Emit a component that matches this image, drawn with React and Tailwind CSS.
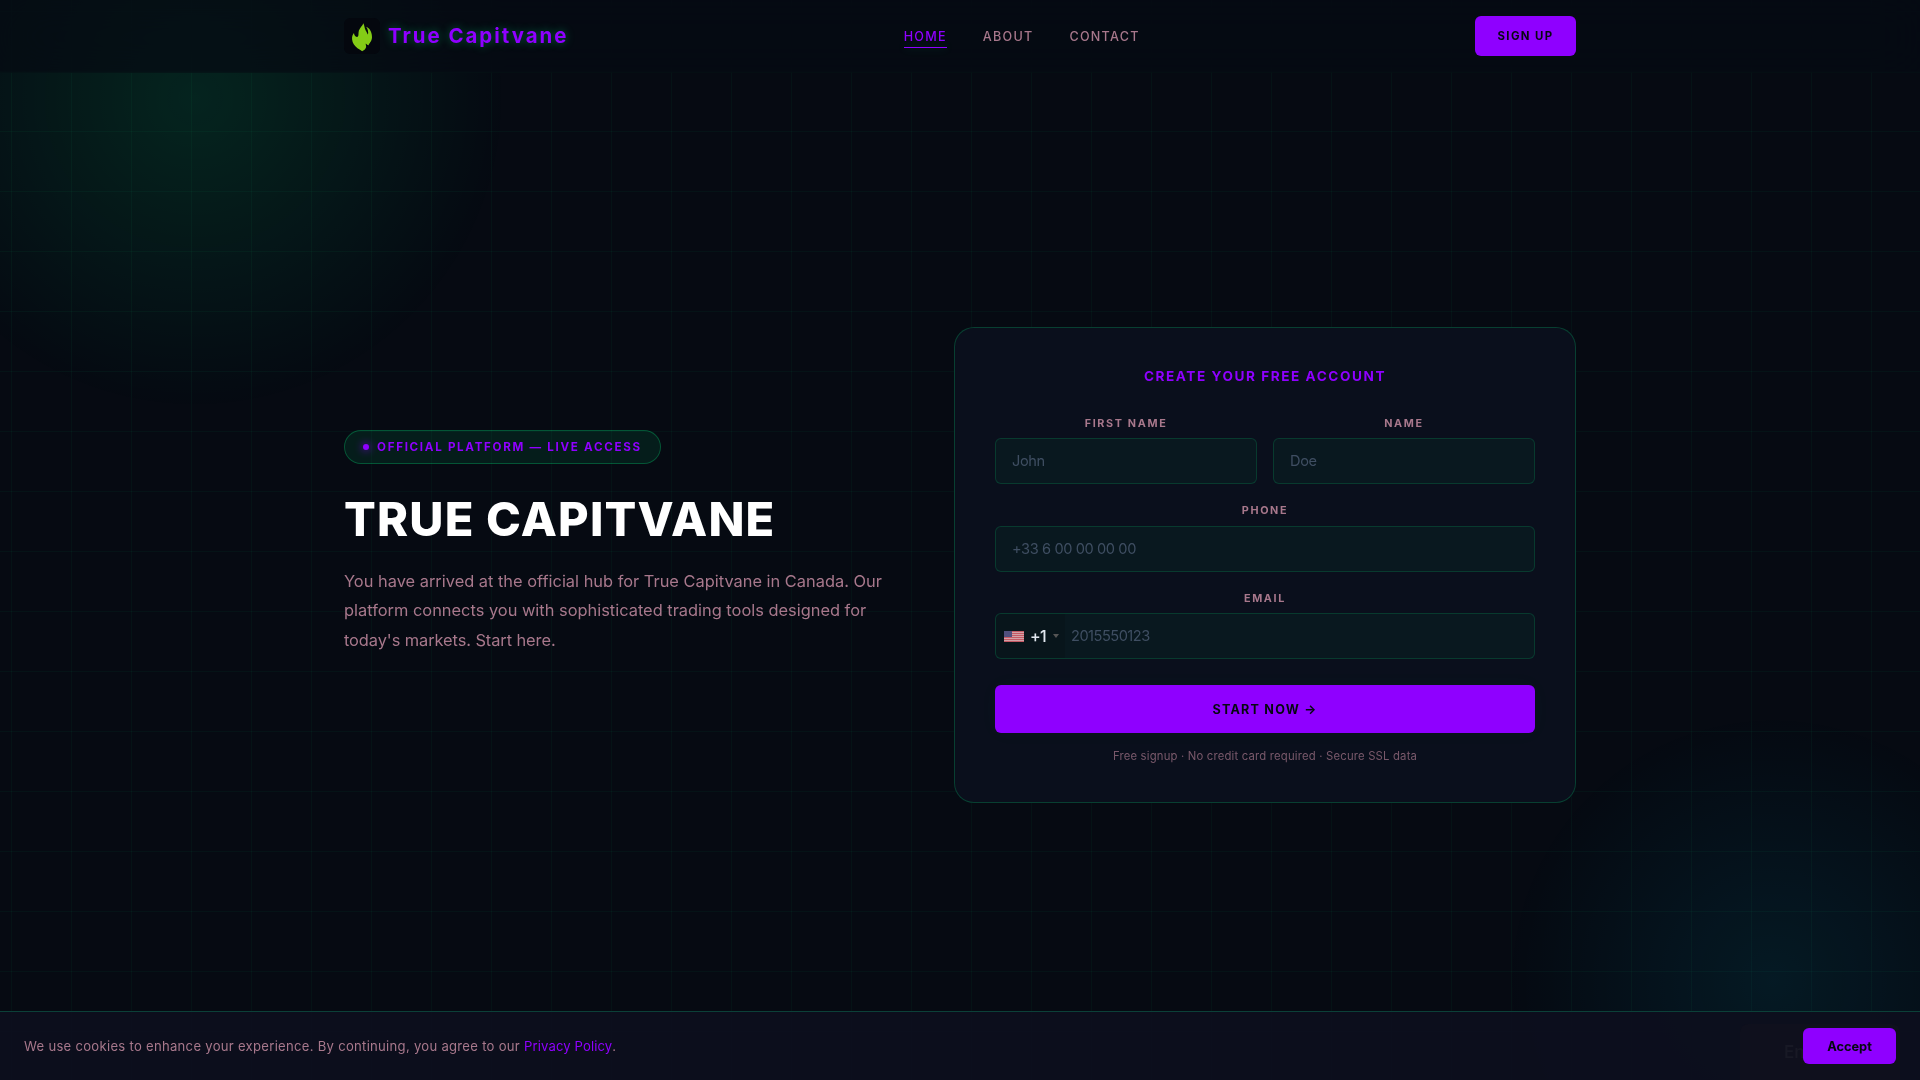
const navLinks = [
  { label: "HOME", active: true },
  { label: "ABOUT" },
  { label: "CONTACT" },
];

const inputClass =
  "h-[46px] w-full rounded-md border border-[#00ff88]/15 bg-[#00ff88]/[0.04] px-4 text-[14.6px] tracking-[-0.4px] text-white outline-none placeholder:text-[#3f4e62]";

function FlameLogo() {
  return (
    <svg viewBox="0 0 36 36" className="h-9 w-9 rounded-md bg-[#04070e]">
      <path
        fill="#84cc16"
        d="M19.3 5.2C18.8 7.6 16 9.2 14.9 12.6C14.2 14.9 14.8 17 14 18.5C13 19.6 11.4 18.6 10.8 17.6C10.2 16.8 10 16 10 15C8.6 16.6 7.8 18.6 8.1 21.5C8.4 25 10.4 27.8 13.5 30.2C15.2 31.5 16.9 32 18.1 33.2C19.8 32.4 21.6 31 22.1 29.2C22.4 27.8 21.5 27 21.8 25.6C22.6 26 23 27.2 24.6 27.3C25 25.4 27.9 23.5 28 19.3C28.1 15.5 26.5 10.4 22.1 8.8C23.6 10.7 24.6 13.6 24 16.6C23.4 16.2 22.8 14 21.7 12.4C20.5 10.4 20.6 7.5 19.3 5.2Z"
      />
    </svg>
  );
}

function UsFlag() {
  return (
    <svg viewBox="0 0 20 11" className="h-[11px] w-5 opacity-90" shapeRendering="crispEdges">
      <rect width="20" height="11" fill="#e8b0b6" />
      {[0, 2, 4, 6, 8, 10].map((y) => (
        <rect key={y} y={y} width="20" height="1" fill="#d9616c" />
      ))}
      <rect width="8" height="6" fill="#5a5688" />
    </svg>
  );
}

function Field({ label, children }) {
  return (
    <div className="w-full">
      <label className="mb-[6.5px] block text-center text-[10.8px] leading-4 font-bold tracking-[1.65px] text-[#a8788c]">
        {label}
      </label>
      {children}
    </div>
  );
}

function Background() {
  return (
    <div className="fixed inset-0 overflow-hidden">
      <div className="absolute inset-0 bg-[linear-gradient(rgba(0,255,136,0.04)_1px,transparent_1px),linear-gradient(90deg,rgba(0,255,136,0.04)_1px,transparent_1px)] bg-[size:60px_60px] bg-[position:11px_11px]" />
      <div className="absolute -top-[217px] -left-[120px] h-[630px] w-[630px] rounded-full bg-[radial-gradient(circle,rgba(0,255,136,0.11)_0%,transparent_70%)]" />
      <div className="absolute -right-[123px] -bottom-[171px] h-[540px] w-[540px] rounded-full bg-[radial-gradient(circle,rgba(0,212,255,0.08)_0%,transparent_70%)]" />
    </div>
  );
}

function Header() {
  return (
    <header className="fixed inset-x-0 top-0 z-20 h-[73px] border-b border-[#00ff88]/[0.02] bg-[#060a12]/70 backdrop-blur-xl">
      <div className="mx-auto flex h-full w-[1232px] items-center justify-between">
        <a href="#" className="flex items-center gap-2">
          <FlameLogo />
          <span className="text-[20.4px] font-bold tracking-[2px] text-[#8f00ff] [text-shadow:0_0_10px_rgba(0,255,136,0.4)]">
            True Capitvane
          </span>
        </a>
        <nav className="flex gap-9 pt-0.5">
          {navLinks.map((link) => (
            <a
              key={link.label}
              href="#"
              className={
                link.active
                  ? "relative text-[12.6px] leading-5 font-medium tracking-[1.25px] text-[#8f00ff]"
                  : "text-[12.6px] leading-5 font-medium tracking-[1.25px] text-[#a8788c]"
              }
            >
              {link.label}
              {link.active && (
                <span className="absolute inset-x-0 -bottom-[1px] h-px bg-[#8f00ff] shadow-[0_0_8px_rgba(0,255,136,0.3)]" />
              )}
            </a>
          ))}
        </nav>
        <button className="h-10 w-[101px] rounded-md bg-[#8f00ff] pt-px text-[11.4px] font-bold tracking-[1.4px] text-[#050810]">
          SIGN UP
        </button>
      </div>
    </header>
  );
}

function Intro() {
  return (
    <div className="w-[546px] pb-[45px]">
      <div className="mb-7 flex h-[34px] w-[317px] items-center gap-2 rounded-full border border-[#00ff88]/25 bg-[#00ff88]/[0.08] pl-[18px]">
        <span className="h-1.5 w-1.5 rounded-full bg-[#8f00ff] shadow-[0_0_8px_#8f00ff]" />
        <span className="pt-px text-[11.6px] font-bold tracking-[1.7px] whitespace-nowrap text-[#8f00ff]">
          OFFICIAL PLATFORM — LIVE ACCESS
        </span>
      </div>
      <h1 className="mb-[21px] text-[47px] leading-[54px] font-extrabold tracking-[1.2px] text-white">
        TRUE CAPITVANE
      </h1>
      <p className="text-[16.4px] leading-[29.5px] text-[#a8788c]">
        You have arrived at the official hub for True Capitvane in Canada. Our
        <br />
        platform connects you with sophisticated trading tools designed for
        <br />
        <span className="tracking-[-0.08px]">today's markets. Start here.</span>
      </p>
    </div>
  );
}

function SignupForm() {
  return (
    <form className="w-[622px] rounded-[20px] border border-[#00ff88]/20 bg-[#0a0f1c] px-10 pt-10 pb-[38px]">
      <h2 className="mb-[31.5px] text-center text-[13.6px] leading-4 font-bold tracking-[1.55px] text-[#8f00ff]">
        CREATE YOUR FREE ACCOUNT
      </h2>
      <div className="flex flex-col gap-[19px]">
        <div className="flex gap-4">
          <Field label="FIRST NAME">
            <input className={inputClass} placeholder="John" />
          </Field>
          <Field label="NAME">
            <input className={inputClass} placeholder="Doe" />
          </Field>
        </div>
        <Field label="PHONE">
          <input className={inputClass} placeholder="+33 6 00 00 00 00" />
        </Field>
        <Field label="EMAIL">
          <div className="flex h-[46px] overflow-hidden rounded-md border border-[#00ff88]/15 bg-[#00ff88]/[0.04]">
            <div className="flex w-[69px] items-center bg-black/10 pl-2">
              <UsFlag />
              <span className="ml-[6px] text-base font-medium tracking-[-0.6px] text-[#e2e8f0]">+1</span>
              <span className="ml-[7px] h-0 w-0 border-x-[3px] border-t-4 border-x-transparent border-t-[#555]" />
            </div>
            <input
              className="flex-1 bg-transparent pt-px pl-[6px] text-[14.6px] tracking-[-0.5px] text-white outline-none placeholder:text-[#3f4e62]"
              placeholder="2015550123"
            />
          </div>
        </Field>
      </div>
      <button
        type="button"
        className="mt-[26px] h-12 w-full rounded-md bg-[#8f00ff] pt-0.5 text-[12.6px] font-bold tracking-[1.2px] text-[#050810] shadow-[0_0_20px_rgba(0,255,136,0.03)]"
      >
        START NOW →
      </button>
      <p className="mt-[15px] text-center text-[11.3px] leading-4 tracking-[0.19px] text-[#a8788c]/70">
        Free signup · No credit card required · Secure SSL data
      </p>
    </form>
  );
}

function CookieBar() {
  return (
    <div className="fixed inset-x-0 bottom-0 z-30 flex h-[69px] items-center justify-between border-t border-[#0b4038] bg-[#0d0f1e]/95 px-6">
      <p className="pt-0.5 text-[13.1px] tracking-[0.28px] text-[#a8788c]">
        We use cookies to enhance your experience. By continuing, you agree to our{" "}
        <a href="#" className="tracking-[0.12px] text-[#8f00ff]">Privacy Policy</a>.
      </p>
      <div className="absolute right-5 bottom-0 flex h-14 w-40 items-center rounded-t-lg bg-[#0f101d] pt-px pl-11 text-[17px] font-semibold text-[#181925]">
        En
      </div>
      <button className="relative h-9 w-[93px] rounded-md bg-[#8f00ff] pt-px text-[12.8px] font-bold text-[#050810]">
        Accept
      </button>
    </div>
  );
}

export default function App() {
  return (
    <div className="relative h-screen overflow-hidden bg-[#060a12] font-['Inter',sans-serif]">
      <Background />
      <Header />
      <main className="relative mx-auto flex h-full w-[1232px] items-center justify-between pt-[50px]">
        <Intro />
        <SignupForm />
      </main>
      <CookieBar />
    </div>
  );
}
